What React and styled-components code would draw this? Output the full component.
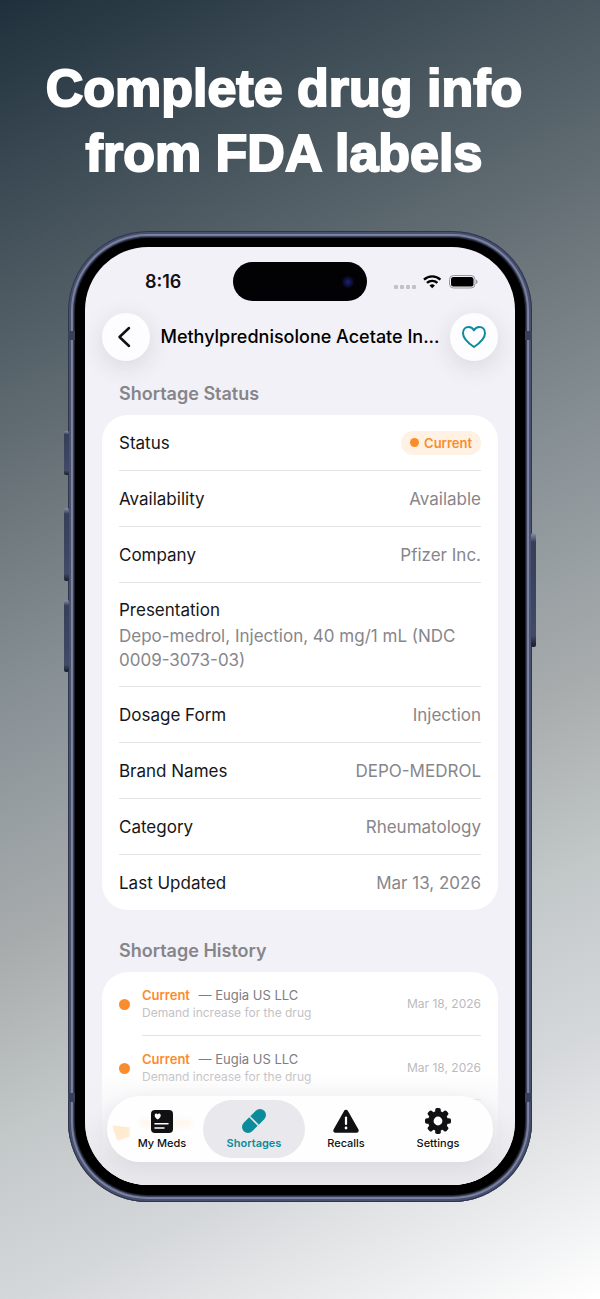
import React from 'react';
import styled, { createGlobalStyle, css } from 'styled-components';

const teal = '#0c8c9b';
const orange = '#fb8c2c';
const ink = '#111113';

const GlobalStyle = createGlobalStyle`
  * {
    box-sizing: border-box;
  }
  body {
    margin: 0;
    font-family: Inter, "Liberation Sans", sans-serif;
    color: ${ink};
  }
  button {
    font: inherit;
    border: 0;
    padding: 0;
    cursor: pointer;
  }
`;

const Page = styled.main`
  min-height: 100vh;
  padding: 56px 68px 97px;
  background: linear-gradient(155deg, #1f303c 0%, #43515a 15%, #6b757a 32%, #868f94 44%, #979ea2 52%, #a7abac 60%, #c2c7c8 72%, #d5d8da 83%, #ebecee 92%, #fff 100%);
`;

// Headline above the phone
const Headline = styled.h1`
  margin: 0 -24px 45px -56px;
  font-family: "Liberation Sans", Arial, sans-serif;
  font-size: 52px;
  font-weight: 700;
  line-height: 65px;
  text-align: center;
  color: #fff;
  -webkit-text-stroke: 2px #fff;
`;

// Metal edge of the phone
const Phone = styled.div`
  position: relative;
  max-width: 464px;
  margin: 0 auto;
  padding: 7px;
  border-radius: 80px;
  background: #343c56;
  box-shadow: inset 0 0 0 1px #30364a, inset 0 0 0 3px #49516f, inset 0 0 1px 5px #7c85a4;
`;

const Bezel = styled.div`
  padding: 9px 10px 10px;
  border-radius: 73px;
  background: #000;
  box-shadow: 0 0 0 1px #20222d;
`;

const SideButton = styled.span`
  position: absolute;
  top: ${({ $top }) => $top}px;
  ${({ $side }) => $side}: -4px;
  width: 5px;
  height: ${({ $height }) => $height}px;
  border-radius: 2px;
  background: linear-gradient(#8b93a8, #363f58 8%, #414a66 90%, #171b28);
`;

const Antenna = styled.span`
  position: absolute;
  ${({ $edge }) => $edge}: 100px;
  ${({ $side }) => $side}: 0;
  width: 7px;
  height: 9px;
  background: #39405a;
`;

const Screen = styled.div`
  position: relative;
  overflow: hidden;
  padding: 15px 17px 0;
  border-radius: 63px;
  background: #f2f1f7;
`;

const StatusBar = styled.div`
  display: grid;
  grid-template-columns: 1fr 134px 1fr;
  align-items: center;
  height: 39px;
`;

const Time = styled.span`
  padding-left: 43px;
  font-size: 18px;
  font-weight: 600;
`;

const Island = styled.span`
  display: flex;
  align-items: center;
  justify-content: flex-end;
  height: 39px;
  padding-right: 13px;
  border-radius: 20px;
  background: #020204;
`;

const Camera = styled.span`
  width: 12px;
  height: 12px;
  border-radius: 50%;
  background: radial-gradient(circle, #1b1f68 10%, #0b0c32 50%, #04040c 80%);
`;

const Signals = styled.span`
  display: flex;
  align-items: center;
  justify-content: flex-end;
  gap: 8px;
  padding-right: 20px;
`;

const NavBar = styled.header`
  display: flex;
  align-items: center;
  justify-content: space-between;
  margin-top: 12px;
`;

const RoundButton = styled.button`
  display: grid;
  place-items: center;
  flex: none;
  width: 48px;
  height: 48px;
  border-radius: 50%;
  background: #fdfcff;
  box-shadow: 0 6px 24px rgba(40, 40, 60, 0.12);
  color: ${({ $color }) => $color || ink};
`;

const Title = styled.h2`
  flex: 1;
  min-width: 0;
  margin: 0;
  font-size: 18px;
  font-weight: 500;
  line-height: 24px;
  text-align: center;
  white-space: nowrap;
  color: #000;
`;

const SectionTitle = styled.h3`
  margin: ${({ $gap }) => $gap}px 17px 9px;
  font-size: 18px;
  font-weight: 600;
  line-height: 24px;
  color: #86858a;
`;

const Card = styled.section`
  padding: 0 17px;
  border-radius: ${({ $open }) => ($open ? '26px 26px 0 0' : '26px')};
  background: #fff;
`;

const List = styled.dl`
  margin: 0;
`;

const Row = styled.div`
  display: flex;
  align-items: center;
  justify-content: space-between;
  height: 56px;
  border-bottom: 1px solid #e4e4e6;
  font-size: 17px;
  line-height: 24px;

  &:last-child {
    height: 55px;
    border-bottom: 0;
  }

  ${({ $stacked }) =>
    $stacked &&
    css`
      flex-direction: column;
      align-items: flex-start;
      justify-content: center;
      gap: 2px;
      height: 104px;
    `}
`;

const Label = styled.dt`
  color: #161618;
`;

const Value = styled.dd`
  margin: 0;
  color: #87868b;
`;

const Badge = styled.span`
  display: flex;
  align-items: center;
  gap: 5px;
  height: 24px;
  padding: 0 9px;
  border-radius: 12px;
  background: #fff1e4;
  font-size: 13px;
  font-weight: 600;
  color: ${orange};
`;

const Dot = styled.span`
  flex: none;
  width: ${({ $size }) => $size}px;
  height: ${({ $size }) => $size}px;
  border-radius: 50%;
  background: ${orange};
`;

const HistoryList = styled.ul`
  margin: 0;
  padding: 0 0 85px;
  list-style: none;
`;

const HistoryItem = styled.li`
  display: flex;
  align-items: center;
  gap: 12px;
`;

const HistoryBody = styled.div`
  display: flex;
  flex: 1;
  align-items: center;
  justify-content: space-between;
  height: 64px;
  border-bottom: 1px solid #e2e2e4;
`;

const HistoryLine = styled.p`
  margin: 0;
  font-size: 13px;
  line-height: 17px;
  color: #7e7d82;

  strong {
    margin-right: 5px;
    font-weight: 600;
    color: ${orange};
  }
`;

const Note = styled.p`
  margin: 0;
  font-size: 12px;
  line-height: 17px;
  color: #c3c2c6;
`;

const HistoryDate = styled.time`
  font-size: 12px;
  color: #bbbabf;
`;

// Fades the list out under the tab bar
const Fade = styled.div`
  position: absolute;
  inset: auto 0 0;
  height: 114px;
  background: linear-gradient(rgba(242, 241, 245, 0), rgba(240, 239, 243, 0.6) 35%, #e8e7eb 80%);
`;

const TabBar = styled.nav`
  position: absolute;
  right: 22px;
  bottom: 23px;
  left: 22px;
  display: grid;
  grid-template-columns: repeat(4, 1fr);
  height: 66px;
  padding: 4px 9px;
  border-radius: 33px;
  background: rgba(254, 254, 255, 0.96);
  box-shadow: 0 4px 20px rgba(40, 40, 60, 0.07);

  /* orange of the row underneath, bent by the glass edge */
  &::before {
    content: "";
    position: absolute;
    top: 29px;
    left: 5px;
    width: 18px;
    height: 16px;
    background: #ffecd0;
    clip-path: polygon(0 0, 100% 15%, 100% 70%, 30% 100%);
    filter: blur(1px);
  }

  &::after {
    content: "";
    position: absolute;
    top: 23px;
    left: 34px;
    width: 50px;
    height: 8px;
    background: #fff6ec;
    filter: blur(2px);
  }
`;

const Tab = styled.button`
  position: relative;
  z-index: 1;
  display: flex;
  flex-direction: column;
  align-items: center;
  justify-content: center;
  gap: 1px;
  margin: 0 -5px;
  border-radius: 29px;
  background: ${({ $active }) => ($active ? '#e9e8ec' : 'none')};
  font-size: 11px;
  font-weight: ${({ $active }) => ($active ? 600 : 500)};
  line-height: 16px;
  color: ${({ $active }) => ($active ? teal : ink)};
`;

const details = [
  { label: 'Availability', value: 'Available' },
  { label: 'Company', value: 'Pfizer Inc.' },
  {
    label: 'Presentation',
    value: 'Depo-medrol, Injection, 40 mg/1 mL (NDC 0009-3073-03)',
    stacked: true,
  },
  { label: 'Dosage Form', value: 'Injection' },
  { label: 'Brand Names', value: 'DEPO-MEDROL' },
  { label: 'Category', value: 'Rheumatology' },
  { label: 'Last Updated', value: 'Mar 13, 2026' },
];

const history = [1, 2];

const MedsIcon = () => (
  <svg width="26" height="26" viewBox="0 0 26 26" fill="currentColor">
    <rect x="2" y="2" width="22" height="23" rx="4" />
    <path d="M8.700 11.500C6.500 9.800 5.700 8.700 5.700 7.400c0-2 2.300-2.500 3-1 .7-1.500 3-1 3 1 0 1.300-.8 2.400-3 4.100z" fill="#fff" />
    <path d="M6 15.800h13M6 20h9" stroke="#fff" strokeWidth="1.500" strokeLinecap="round" />
  </svg>
);

const PillIcon = () => (
  <svg width="26" height="26" viewBox="0 0 26 26">
    <g transform="rotate(-45 13 13)" fill="currentColor">
      <path d="M12.200 7v12H4.500a6 6 0 0 1 0-12z" />
      <path d="M13.800 7v12H21.500a6 6 0 0 0 0-12z" />
    </g>
  </svg>
);

const RecallIcon = () => (
  <svg width="28" height="26" viewBox="0 0 28 26">
    <path d="M14 4 3.500 22.500h21z" fill="currentColor" stroke="currentColor" strokeWidth="4.500" strokeLinejoin="round" />
    <path d="M14 9.500v6.500" stroke="#fff" strokeWidth="2.200" strokeLinecap="round" />
    <circle cx="14" cy="20" r="1.400" fill="#fff" />
  </svg>
);

const GearIcon = () => (
  <svg width="26" height="26" viewBox="0 0 26 26">
    <g fill="currentColor">
      {[0, 45, 90, 135, 180, 225, 270, 315].map((angle) => (
        <rect key={angle} x="10.200" y="0" width="5.600" height="6" rx="1.800" transform={`rotate(${angle} 13 13)`} />
      ))}
    </g>
    <circle cx="13" cy="13" r="7.200" fill="none" stroke="currentColor" strokeWidth="5.600" />
  </svg>
);

const tabs = [
  { name: 'My Meds', icon: <MedsIcon /> },
  { name: 'Shortages', icon: <PillIcon />, active: true },
  { name: 'Recalls', icon: <RecallIcon /> },
  { name: 'Settings', icon: <GearIcon /> },
];

const StatusIcons = () => (
  <Signals>
    <svg width="84" height="16" viewBox="0 0 84 16">
      <g fill="#c2c1c7">
        <rect x="0" y="11" width="4" height="4" rx="1" />
        <rect x="6" y="11" width="4" height="4" rx="1" />
        <rect x="12" y="11" width="4" height="4" rx="1" />
        <rect x="18" y="11" width="4" height="4" rx="1" />
      </g>
      <g fill="none" stroke="#000" strokeWidth="2.400">
        <path d="M30 5.600a12 12 0 0 1 16.400 0" />
        <path d="M33 8.900a7.600 7.600 0 0 1 10.400 0" />
      </g>
      <path d="M38.200 14.300l-2.700-2.900a4 4 0 0 1 5.400 0z" />
      <rect x="55.500" y="1.500" width="25.500" height="12.500" rx="4" fill="none" stroke="#98979c" />
      <rect x="57" y="3" width="22.500" height="9.500" rx="2.500" />
      <path d="M82 5.500c2 .8 2 3.700 0 4.500z" fill="#98979c" />
    </svg>
  </Signals>
);

export default function App() {
  return (
    <>
      <GlobalStyle />
      <Page>
        <Headline>
          Complete drug info
          <br />
          from FDA labels
        </Headline>
        <Phone>
          <SideButton $side="left" $top={200} $height={44} />
          <SideButton $side="left" $top={277} $height={73} />
          <SideButton $side="left" $top={369} $height={72} />
          <SideButton $side="right" $top={302} $height={114} />
          <Antenna $side="left" $edge="top" />
          <Antenna $side="right" $edge="top" />
          <Antenna $side="left" $edge="bottom" />
          <Antenna $side="right" $edge="bottom" />
          <Bezel>
            <Screen>
              <StatusBar>
                <Time>8:16</Time>
                <Island>
                  <Camera />
                </Island>
                <StatusIcons />
              </StatusBar>
              <NavBar>
                <RoundButton aria-label="Back">
                  <svg width="24" height="24" viewBox="0 0 24 24" fill="none" stroke="currentColor" strokeWidth="2.500" strokeLinecap="round" strokeLinejoin="round">
                    <path d="M15 3 5.500 12 15 21" />
                  </svg>
                </RoundButton>
                <Title>Methylprednisolone Acetate In...</Title>
                <RoundButton aria-label="Add to favorites" $color={teal}>
                  <svg width="26" height="24" viewBox="0 0 26 24" fill="none" stroke="currentColor" strokeWidth="2" strokeLinejoin="round">
                    <path d="M13 22C6 17.200 2 12.800 2 8.200 2 4.600 4.400 2 7.600 2 9.900 2 11.900 3.200 13 5.400 14.100 3.200 16.100 2 18.400 2 21.600 2 24 4.600 24 8.200 24 12.800 20 17.200 13 22z" />
                  </svg>
                </RoundButton>
              </NavBar>
              <SectionTitle $gap={21}>Shortage Status</SectionTitle>
              <Card>
                <List>
                  <Row>
                    <Label>Status</Label>
                    <Value>
                      <Badge>
                        <Dot $size={9} />
                        Current
                      </Badge>
                    </Value>
                  </Row>
                  {details.map(({ label, value, stacked }) => (
                    <Row key={label} $stacked={stacked}>
                      <Label>{label}</Label>
                      <Value>{value}</Value>
                    </Row>
                  ))}
                </List>
              </Card>
              <SectionTitle $gap={29}>Shortage History</SectionTitle>
              <Card $open>
                <HistoryList>
                  {history.map((id) => (
                    <HistoryItem key={id}>
                      <Dot $size={11} />
                      <HistoryBody>
                        <div>
                          <HistoryLine>
                            <strong>Current</strong> — Eugia US LLC
                          </HistoryLine>
                          <Note>Demand increase for the drug</Note>
                        </div>
                        <HistoryDate>Mar 18, 2026</HistoryDate>
                      </HistoryBody>
                    </HistoryItem>
                  ))}
                </HistoryList>
              </Card>
              <Fade />
              <TabBar>
                {tabs.map(({ name, icon, active }) => (
                  <Tab key={name} $active={active}>
                    {icon}
                    {name}
                  </Tab>
                ))}
              </TabBar>
            </Screen>
          </Bezel>
        </Phone>
      </Page>
    </>
  );
}
